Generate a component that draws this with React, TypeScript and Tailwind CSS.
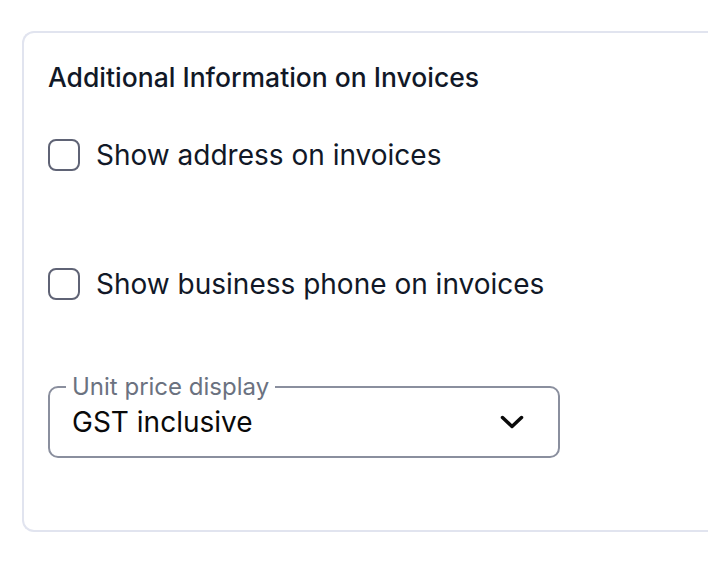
import { useState } from "react";

function Checkbox({ label }: { label: string }) {
  const [checked, setChecked] = useState(false);
  return (
    <label className="flex items-center gap-[16px] cursor-pointer">
      <input
        type="checkbox"
        checked={checked}
        onChange={() => setChecked(!checked)}
        className="h-[32px] w-[32px] appearance-none rounded-[8px] border-2 border-[#5f6375] bg-white"
      />
      <span className="text-[28px] leading-[32px] text-[#111827]">{label}</span>
    </label>
  );
}

export default function App() {
  return (
    <div
      className="min-h-[562px] bg-white pl-[22px] pt-[31px]"
      style={{ fontFamily: "Inter, 'Noto Sans', sans-serif" }}
    >
      <div className="h-[501px] rounded-l-[12px] border-2 border-r-0 border-[#e1e4ef] pl-[24px] pt-[28px]">
        <h2 className="text-[26.5px] font-medium leading-[32px] text-[#111827]">
          Additional Information on Invoices
        </h2>
        <div className="mt-[46px]">
          <Checkbox label="Show address on invoices" />
        </div>
        <div className="mt-[97px]">
          <Checkbox label="Show business phone on invoices" />
        </div>
        <fieldset className="mt-[75px] w-[512px] rounded-[10px] border-2 border-[#8a8f9e] px-[16px] pb-[18px] pt-0">
          <legend className="px-[6px] text-[24px] leading-[24px] text-[#6b7280]">
            Unit price display
          </legend>
          <div className="mt-[7px] flex items-center justify-between pl-[6px]">
            <span className="text-[28px] leading-[32px] text-[#0a0a0a]">GST inclusive</span>
            <svg
              width="24"
              height="14"
              viewBox="0 0 24 14"
              fill="none"
              stroke="#0a0a0a"
              strokeWidth="3.5"
              strokeLinecap="round"
              strokeLinejoin="round"
              className="mr-[18px]"
            >
              <path d="M2.5 2.5L12 11.5L21.5 2.5" />
            </svg>
          </div>
        </fieldset>
      </div>
    </div>
  );
}
